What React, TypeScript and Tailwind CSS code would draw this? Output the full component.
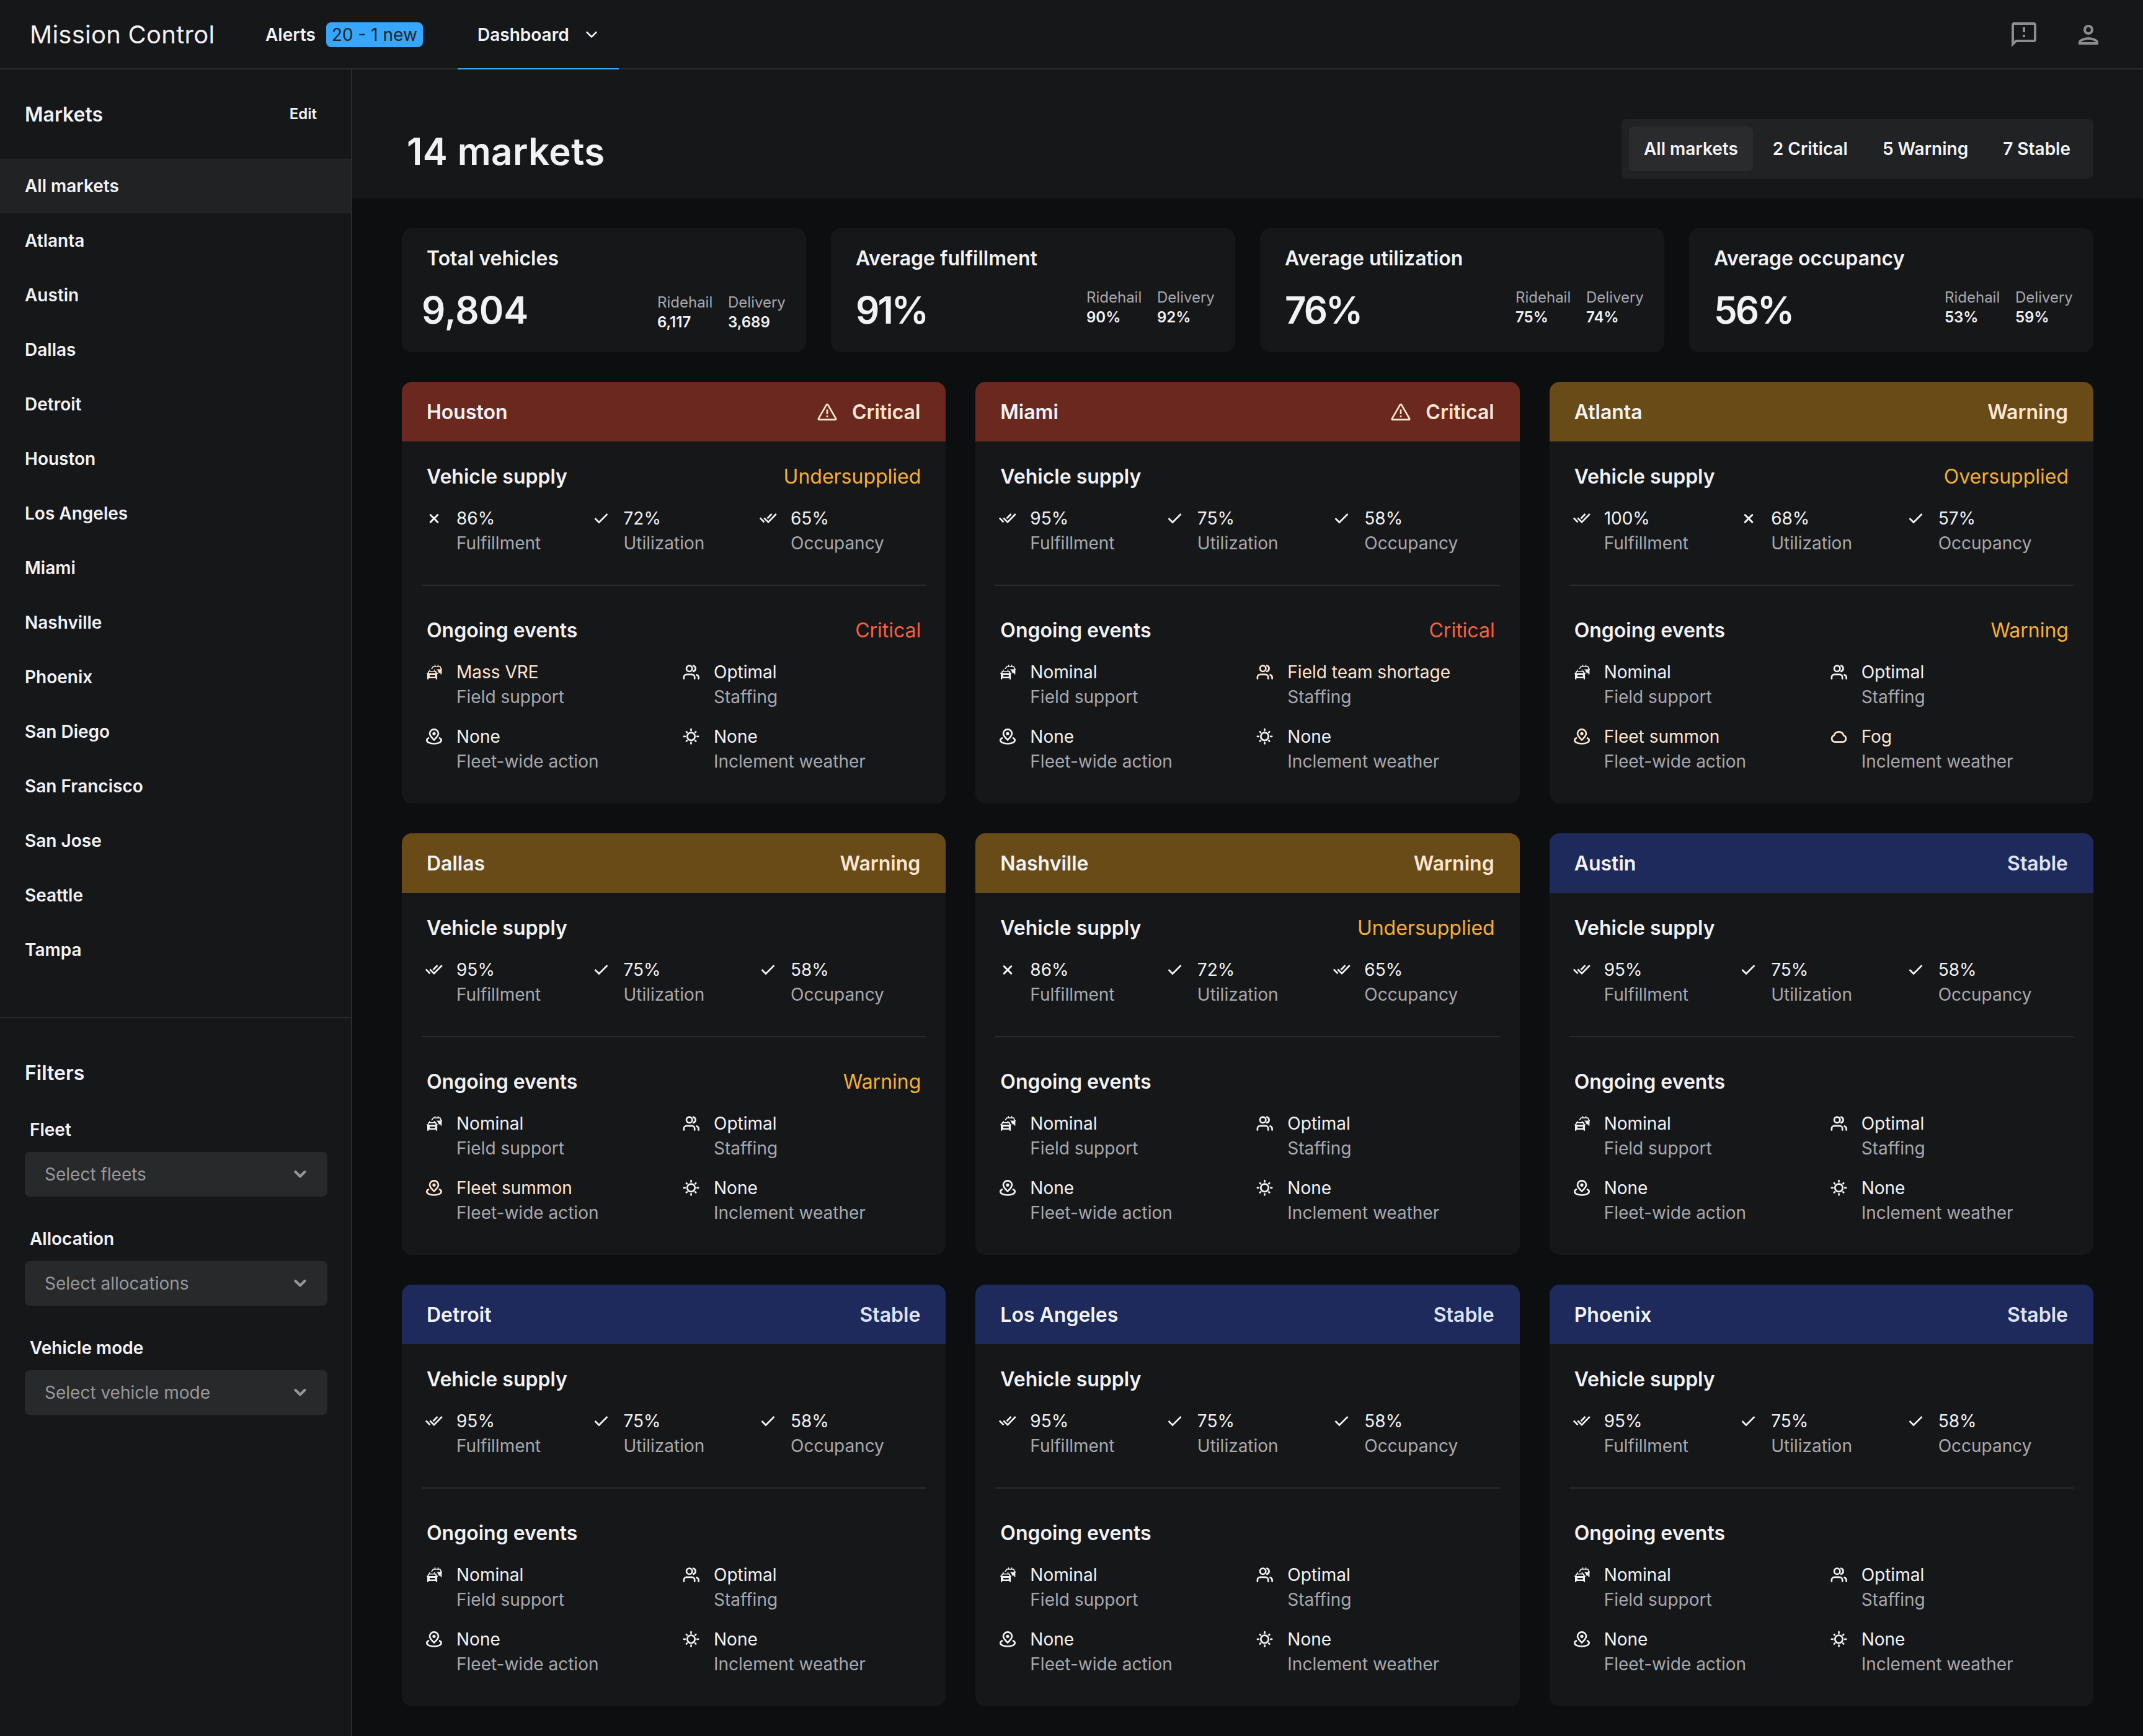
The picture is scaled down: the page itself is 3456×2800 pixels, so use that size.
import { clsx } from "clsx";
import type { ReactNode } from "react";
import { MdOutlineFeedback, MdOutlinePerson } from "react-icons/md";

type Status = "Critical" | "Warning" | "Stable";
type Level = "low" | "ok" | "high";
type Stat = [string, Level];

type Market = {
  name: string;
  status: Status;
  supply?: string;
  events?: Status;
  stats: [Stat, Stat, Stat];
  field?: string;
  staffing?: string;
  action?: string;
  weather?: string;
};

const defaultStats: [Stat, Stat, Stat] = [
  ["95%", "high"],
  ["75%", "ok"],
  ["58%", "ok"],
];

const lowStats: [Stat, Stat, Stat] = [
  ["86%", "low"],
  ["72%", "ok"],
  ["65%", "high"],
];

const markets: Market[] = [
  {
    name: "Houston",
    status: "Critical",
    supply: "Undersupplied",
    events: "Critical",
    stats: lowStats,
    field: "Mass VRE",
  },
  {
    name: "Miami",
    status: "Critical",
    events: "Critical",
    stats: defaultStats,
    staffing: "Field team shortage",
  },
  {
    name: "Atlanta",
    status: "Warning",
    supply: "Oversupplied",
    events: "Warning",
    stats: [
      ["100%", "high"],
      ["68%", "low"],
      ["57%", "ok"],
    ],
    action: "Fleet summon",
    weather: "Fog",
  },
  {
    name: "Dallas",
    status: "Warning",
    events: "Warning",
    stats: defaultStats,
    action: "Fleet summon",
  },
  {
    name: "Nashville",
    status: "Warning",
    supply: "Undersupplied",
    stats: lowStats,
  },
  { name: "Austin", status: "Stable", stats: defaultStats },
  { name: "Detroit", status: "Stable", stats: defaultStats },
  { name: "Los Angeles", status: "Stable", stats: defaultStats },
  { name: "Phoenix", status: "Stable", stats: defaultStats },
];

const marketNames = [
  "All markets",
  "Atlanta",
  "Austin",
  "Dallas",
  "Detroit",
  "Houston",
  "Los Angeles",
  "Miami",
  "Nashville",
  "Phoenix",
  "San Diego",
  "San Francisco",
  "San Jose",
  "Seattle",
  "Tampa",
];

const filters = [
  { label: "Fleet", placeholder: "Select fleets" },
  { label: "Allocation", placeholder: "Select allocations" },
  { label: "Vehicle mode", placeholder: "Select vehicle mode" },
];

const totals = [
  { title: "Total vehicles", value: "9,804", ridehail: "6,117", delivery: "3,689" },
  { title: "Average fulfillment", value: "91%", ridehail: "90%", delivery: "92%" },
  { title: "Average utilization", value: "76%", ridehail: "75%", delivery: "74%" },
  { title: "Average occupancy", value: "56%", ridehail: "53%", delivery: "59%" },
];

function Icon({ children, className }: { children: ReactNode; className?: string }) {
  return (
    <svg
      viewBox="0 0 28 28"
      fill="none"
      stroke="currentColor"
      strokeWidth={2.7}
      strokeLinecap="round"
      strokeLinejoin="round"
      className={clsx("size-7 shrink-0", className)}
    >
      {children}
    </svg>
  );
}

function LevelIcon({ level }: { level: Level }) {
  if (level === "low") {
    return (
      <Icon>
        <path d="M8.2 8.5l11.6 11.6M19.8 8.5L8.2 20.1" strokeWidth={3} />
      </Icon>
    );
  }
  if (level === "ok") {
    return (
      <Icon>
        <path d="M3.5 14l6.5 6.5L23.5 7" strokeLinecap="butt" strokeLinejoin="miter" />
      </Icon>
    );
  }
  return (
    <Icon>
      <path
        d="M.8 13.5l6.7 6.7M7.3 13.5l6.7 6.7L26.8 7M12.5 14.2L19.5 7"
        strokeLinecap="butt"
        strokeLinejoin="miter"
      />
    </Icon>
  );
}

function CarsIcon() {
  return (
    <Icon>
      <g fill="currentColor" stroke="none">
        <path d="M14.7 2.2h1.6v2h3.4v-2h1.6v2h3l1.7 4.3h1v1.7h-.6v7.4h-1.9v-2h-2.7l-2.3-4.5-1.8-1.7h6.8L23.3 5.7H13.2L11 9H9l3.2-4.8h2.5z" />
        <path
          fillRule="evenodd"
          d="M6.2 9.9h1.6v2h5.9v-2h1.6v2h1.9l1.6 3.7h1.2v1.5h-.9v8.7h-2.2v-1.9H5.2v1.9H3v-8.7h-.8v-1.5h1.2L5 11.9h1.2zM6.2 13.5l-1 2.4h11.5l-1-2.4zM7 18.9v2.5h8.8v-2.5z"
        />
      </g>
    </Icon>
  );
}

function PeopleIcon() {
  return (
    <Icon>
      <circle cx="10.7" cy="8.3" r="4.7" />
      <path d="M1.9 24.6v-2.5a4.3 4.3 0 0 1 4.3-4.2h8.7a4.3 4.3 0 0 1 4.3 4.2v2.5" />
      <path d="M17.2 3.7a4.8 4.8 0 0 1 0 9.2" />
      <path d="M22.5 18.5a4.3 4.3 0 0 1 3.1 4v2.1" />
    </Icon>
  );
}

function PinIcon() {
  return (
    <Icon>
      <path d="M14 19.5c-3.8-3.7-7-6.7-7-10.2a7 7 0 0 1 14 0c0 3.5-3.2 6.5-7 10.2z" />
      <circle cx="14" cy="9.3" r="1.3" />
      <path d="M5 16.5c-1.9.9-2.7 2-2.7 3.3 0 3.3 4.7 5.7 11.7 5.7s11.7-2.4 11.7-5.7c0-1.3-.8-2.4-2.7-3.3" />
    </Icon>
  );
}

function SunIcon() {
  return (
    <Icon>
      <circle cx="13.5" cy="13.8" r="6.2" />
      <path d="M13.5 2.2v2M13.5 23.5v2M1.8 13.8h2M23.2 13.8h2M5.9 6.2l1 1M20.2 20.5l1 1M5.9 21.5l1-1M20.2 7.2l1-1" />
    </Icon>
  );
}

function CloudIcon() {
  return (
    <Icon>
      <path d="M7.2 22.7a5.4 5.4 0 0 1-1.4-10.5 8 8 0 0 1 15.4 0 5.4 5.4 0 0 1-1.4 10.5z" />
    </Icon>
  );
}

function WarningIcon() {
  return (
    <svg
      viewBox="0 0 32 32"
      fill="none"
      stroke="currentColor"
      strokeWidth={2.7}
      strokeLinejoin="round"
      strokeLinecap="butt"
      className="size-8"
    >
      <path d="M14.7 4.2a1.5 1.5 0 0 1 2.6 0L30 26.2a1 1 0 0 1-.9 1.6H2.900a1 1 0 0 1-.9-1.6z" />
      <path d="M16 11.5v7.500M16 21.300v2.700" />
    </svg>
  );
}

function Chevron({ className, width }: { className?: string; width: number }) {
  return (
    <svg
      viewBox="0 0 20 12"
      fill="none"
      stroke="currentColor"
      strokeWidth={width}
      strokeLinecap="round"
      strokeLinejoin="round"
      className={clsx("h-3 w-5", className)}
    >
      <path d="M2.5 2l7.5 7.5L17.5 2" />
    </svg>
  );
}

function Header() {
  return (
    <header className="flex h-28 items-stretch border-b-2 border-[#2a2b2d] bg-[#161719]">
      <div className="flex w-[428px] items-center pt-0.5 pl-12 text-[40px] tracking-[0.25px]">
        Mission Control
      </div>
      <div className="flex w-[310px] items-center gap-[17px] pt-0.5 text-[28px] font-semibold">
        Alerts
        <span className="flex h-10 w-[156px] items-center justify-center rounded-lg bg-[#36a6ff] font-normal text-[#232528]">
          20 - 1 new
        </span>
      </div>
      <div className="-mb-0.5 flex w-[260px] items-center gap-[26px] border-b-2 border-[#36a6ff] pt-0.5 pl-8 text-[28px] font-semibold">
        Dashboard
        <Chevron width={2.5} />
      </div>
      <div className="ml-auto flex items-center gap-14 pt-0.5 pr-16 text-[#8c8d91]">
        <MdOutlineFeedback className="size-12" />
        <MdOutlinePerson className="size-12" />
      </div>
    </header>
  );
}

function Sidebar() {
  return (
    <aside className="w-[568px] shrink-0 border-r-2 border-[#2a2b2d] bg-[#161719]">
      <div className="flex h-36 items-center justify-between pr-[55px] pl-10 font-semibold">
        <h2 className="pt-0.5 text-[32px] leading-10">Markets</h2>
        <button className="text-2xl">Edit</button>
      </div>
      <nav>
        {marketNames.map((name, i) => (
          <a
            key={name}
            className={clsx("flex h-22 items-center pl-10 text-[28px] font-semibold", {
              "bg-[#212224]": i === 0,
            })}
          >
            {name}
          </a>
        ))}
      </nav>
      <div className="mt-16 border-t-2 border-[#2a2b2d] px-10 pt-[69px]">
        <h2 className="mb-[51px] text-[32px] leading-10 font-semibold">Filters</h2>
        <div className="flex w-[488px] flex-col gap-12">
          {filters.map((f) => (
            <div key={f.label} className="flex flex-col gap-4 text-[28px] leading-10">
              <label className="pl-2 font-semibold">{f.label}</label>
              <div className="flex h-18 items-center justify-between rounded-lg bg-[#28292b] pr-[34px] pl-8 text-[#97989c]">
                {f.placeholder}
                <Chevron width={4} />
              </div>
            </div>
          ))}
        </div>
      </div>
    </aside>
  );
}

function TotalCard({ title, value, ridehail, delivery }: (typeof totals)[number]) {
  const isCount = !value.includes("%");
  return (
    <div className="h-50 rounded-2xl bg-[#161719] pt-[29px] pl-10">
      <h3 className="text-[32px] leading-10 font-semibold">{title}</h3>
      <div className="mt-[19px] flex">
        <div
          className={clsx("text-[60px] leading-[88px] font-semibold", {
            "-ml-2 w-[380px]": isCount,
            "w-[372px] tracking-[-3px]": !isCount,
          })}
        >
          {value}
        </div>
        <div
          className={clsx("flex text-2xl leading-8", {
            "pt-4": isCount,
            "pt-2": !isCount,
          })}
        >
          <div className="w-[114px]">
            <div className="text-[#a7a8ae]">Ridehail</div>
            <div className="font-semibold">{ridehail}</div>
          </div>
          <div>
            <div className="text-[#a7a8ae]">Delivery</div>
            <div className="font-semibold">{delivery}</div>
          </div>
        </div>
      </div>
    </div>
  );
}

type DetailProps = {
  icon: ReactNode;
  value: string;
  label: string;
  highlight?: boolean;
};

function Detail({ icon, value, label, highlight }: DetailProps) {
  return (
    <div className="flex gap-[22px] text-[28px] leading-10">
      <div className={clsx("pt-1.5", { "text-[#fde5d2]": highlight })}>{icon}</div>
      <div>
        <div className={clsx({ "text-[#fde5d2]": highlight })}>{value}</div>
        <div className="text-[#a7a8ae]">{label}</div>
      </div>
    </div>
  );
}

function MarketCard({ market }: { market: Market }) {
  const { name, status, supply, events, stats } = market;
  return (
    <section className="h-[680px] overflow-hidden rounded-2xl bg-[#161719]">
      <div
        className={clsx(
          "flex h-24 items-center justify-between pt-0.5 pr-[41px] pl-10 text-[32px] font-semibold",
          {
            "bg-[#6a281e]": status === "Critical",
            "bg-[#684b17]": status === "Warning",
            "bg-[#1d2a5b]": status === "Stable",
          },
        )}
      >
        <h3>{name}</h3>
        <div
          className={clsx("flex items-center gap-6", {
            "text-[#fde5d2]": status !== "Stable",
            "text-[#dfe1f4]": status === "Stable",
          })}
        >
          {status === "Critical" && <WarningIcon />}
          {status}
        </div>
      </div>
      <div className="px-8 pt-[37px]">
        <div className="flex justify-between px-2 text-[32px] leading-10">
          <h4 className="font-semibold">Vehicle supply</h4>
          <span className="text-[#f5b02e]">{supply}</span>
        </div>
        <div className="mt-[27px] grid grid-cols-[269.5px_269.5px_1fr] pl-1.5">
          <Detail icon={<LevelIcon level={stats[0][1]} />} value={stats[0][0]} label="Fulfillment" />
          <Detail icon={<LevelIcon level={stats[1][1]} />} value={stats[1][0]} label="Utilization" />
          <Detail icon={<LevelIcon level={stats[2][1]} />} value={stats[2][0]} label="Occupancy" />
        </div>
        <hr className="mt-[47px] mb-[52px] border-t-2 border-[#2a2b2d]" />
        <div className="flex justify-between px-2 text-[32px] leading-10">
          <h4 className="font-semibold">Ongoing events</h4>
          <span
            className={clsx({
              "text-[#f7603f]": events === "Critical",
              "text-[#f5b02e]": events === "Warning",
            })}
          >
            {events}
          </span>
        </div>
        <div className="mt-[27px] grid grid-cols-[415px_1fr] gap-y-6 pl-1.5">
          <Detail
            icon={<CarsIcon />}
            value={market.field ?? "Nominal"}
            label="Field support"
            highlight={!!market.field}
          />
          <Detail
            icon={<PeopleIcon />}
            value={market.staffing ?? "Optimal"}
            label="Staffing"
            highlight={!!market.staffing}
          />
          <Detail
            icon={<PinIcon />}
            value={market.action ?? "None"}
            label="Fleet-wide action"
            highlight={!!market.action}
          />
          <Detail
            icon={market.weather ? <CloudIcon /> : <SunIcon />}
            value={market.weather ?? "None"}
            label="Inclement weather"
            highlight={!!market.weather}
          />
        </div>
      </div>
    </section>
  );
}

export default function App() {
  return (
    <div className="flex h-[2800px] w-[3456px] flex-col overflow-hidden bg-[#0d0e10] font-['Inter',sans-serif] text-[#f1f2f4]">
      <Header />
      <div className="flex flex-1">
        <Sidebar />
        <main className="flex-1">
          <div className="flex h-52 justify-between bg-[#161719] pr-20 pl-[88px]">
            <h1 className="pt-[88px] text-[60px] leading-[88px] font-semibold tracking-[0.4px]">
              14 markets
            </h1>
            <div className="mt-20 flex h-24 items-center gap-2 rounded-lg bg-[#212224] pr-[13px] pl-3 text-[28px] font-semibold">
              <button className="h-18 rounded-lg bg-[#2a2b2d] px-6">All markets</button>
              <button className="h-18 px-6">2 Critical</button>
              <button className="h-18 px-6">5 Warning</button>
              <button className="h-18 px-6">7 Stable</button>
            </div>
          </div>
          <div className="px-20 pt-12">
            <div className="grid grid-cols-4 gap-10">
              {totals.map((t) => (
                <TotalCard key={t.title} {...t} />
              ))}
            </div>
            <div className="mt-12 grid grid-cols-3 gap-12">
              {markets.map((m) => (
                <MarketCard key={m.name} market={m} />
              ))}
            </div>
          </div>
        </main>
      </div>
    </div>
  );
}
